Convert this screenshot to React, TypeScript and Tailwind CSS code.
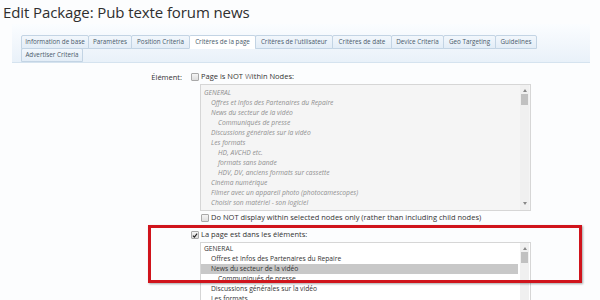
import React from "react";

const tabs1: [string, number, boolean][] = [
  ["Information de base", 68, false],
  ["Paramètres", 44, false],
  ["Position Criteria", 59, false],
  ["Critères de la page", 67, true],
  ["Critères de l'utilisateur", 78, false],
  ["Critères de date", 60, false],
  ["Device Criteria", 53, false],
  ["Geo Targeting", 53, false],
  ["Guidelines", 42, false],
];

const items: [string, number][] = [
  ["GENERAL", 0],
  ["Offres et Infos des Partenaires du Repaire", 1],
  ["News du secteur de la vidéo", 1],
  ["Communiqués de presse", 2],
  ["Discussions générales sur la vidéo", 1],
  ["Les formats", 1],
  ["HD, AVCHD etc.", 2],
  ["formats sans bande", 2],
  ["HDV, DV, anciens formats sur cassette", 2],
  ["Cinéma numérique", 1],
  ["Filmer avec un appareil photo (photocamescopes)", 1],
  ["Choisir son matériel - son logiciel", 1],
];

function Tab({ label, w, active }: { label: string; w: number; active: boolean }) {
  return (
    <div
      style={{ width: w }}
      className={`h-[14px] flex items-center justify-center border border-[#c3d4e4] -ml-px first:ml-0 rounded-t-[2px] text-[6.3px] text-[#4a5a6a] ${
        active ? "bg-white border-b-white" : "bg-gradient-to-b from-[#f2f7fc] to-[#e3edf7]"
      }`}
    >
      {label}
    </div>
  );
}

function Box({ checked }: { checked?: boolean }) {
  return (
    <div className="w-[8px] h-[8px] border border-[#a9a9a9] bg-gradient-to-b from-[#f4f4f4] to-[#dedede] rounded-[1px] flex items-center justify-center shrink-0">
      {checked && (
        <svg width="7" height="7" viewBox="0 0 8 8">
          <path d="M1.2 4.2 L3.2 6.2 L6.8 1.4" stroke="#222" strokeWidth="1.5" fill="none" />
        </svg>
      )}
    </div>
  );
}

function Scroll({ full }: { full?: boolean }) {
  return (
    <div className="absolute right-[1px] top-0 w-[9px] bottom-0 bg-[#f0f0f0] flex flex-col items-center">
      <div className="mt-[4px] w-0 h-0 border-l-[2.5px] border-r-[2.5px] border-b-[3px] border-l-transparent border-r-transparent border-b-[#888]" />
      <div className="mt-[2px] w-[7px] h-[11px] bg-[#c1c1c1]" />
      {!full && (
        <div className="mt-auto mb-[5px] w-0 h-0 border-l-[2.5px] border-r-[2.5px] border-t-[3px] border-l-transparent border-r-transparent border-t-[#888]" />
      )}
    </div>
  );
}

export default function App() {
  return (
    <div
      className="w-[600px] h-[300px] overflow-hidden bg-[#fcfdfe] relative"
      style={{ fontFamily: '"Open Sans", "Noto Sans", sans-serif' }}
    >
      <div className="pl-[3px] pt-[2px] h-[24px] text-[15px] leading-[20px] text-[#2f2f2f] tracking-[-0.1px]">
        Edit Package: Pub texte forum news
      </div>
      <div className="ml-[12px] w-[578px] h-[39px] bg-gradient-to-b from-[#fbfdff] to-[#e9f1f9] border-b border-[#d5e3ef] pl-[9px] pt-[11px]">
        <div className="flex">
          {tabs1.map(([l, w, a]) => (
            <Tab key={l} label={l} w={w} active={a} />
          ))}
        </div>
        <div className="flex -mt-px">
          <Tab label="Advertiser Criteria" w={62} active={false} />
        </div>
      </div>

      <div className="flex mt-[9px]">
        <div className="w-[182px] text-right text-[7.5px] leading-[10px] text-[#333]">Élément:</div>
        <div className="ml-[9px] flex-1">
          <div className="flex items-center gap-[2px] h-[10px]">
            <Box />
            <span className="text-[7.5px] text-[#333]">
              Page is NOT <span className="text-[#777]">W</span>ithin Nodes:
            </span>
          </div>
          <div className="relative ml-[9px] mt-[2px] w-[331px] h-[127px] bg-[#f5f5f5] border border-[#d6d6d6] overflow-hidden pt-[3px]">
            {items.map(([t, lvl]) => (
              <div
                key={t}
                style={{ paddingLeft: 3 + lvl * 7 }}
                className="h-[10px] leading-[10px] text-[6.7px] italic text-[#8f8f8f] whitespace-nowrap"
              >
                {t}
              </div>
            ))}
            <Scroll />
          </div>
          <div className="flex items-center gap-[2px] h-[10px] ml-[10px] mt-[2px]">
            <Box />
            <span className="text-[7.5px] text-[#333] whitespace-nowrap">
              Do NOT display within selected nodes only (rather than including child nodes)
            </span>
          </div>
          <div className="flex items-center gap-[2px] h-[10px] mt-[7px]">
            <Box checked />
            <span className="text-[7.5px] text-[#333]">La page est dans les éléments:</span>
          </div>
          <div className="relative ml-[9px] mt-[2px] w-[331px] h-[80px] bg-white border border-[#d6d6d6] overflow-hidden pt-[1px]">
            {items.slice(0, 6).map(([t, lvl]) => (
              <div
                key={t}
                style={{ paddingLeft: 3 + lvl * 7 }}
                className={`h-[10px] leading-[10px] text-[6.7px] text-[#333] whitespace-nowrap mr-[12px] ${
                  t.startsWith("News") ? "bg-[#c8c8c8]" : ""
                }`}
              >
                {t}
              </div>
            ))}
            <Scroll full />
          </div>
        </div>
      </div>

      <div className="absolute left-[148px] top-[225px] w-[434px] h-[58px] border-[3px] border-[#d0141c] shadow-[1px_1px_2px_rgba(0,0,0,0.35)]" />
    </div>
  );
}
